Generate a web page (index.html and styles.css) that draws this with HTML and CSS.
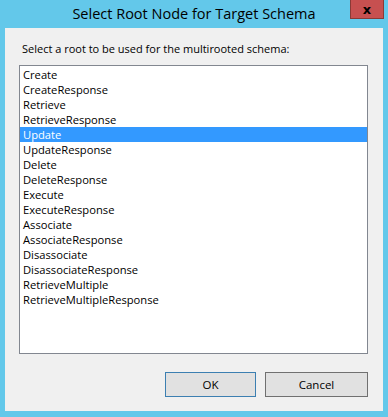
FILE: index.html
```html
<!DOCTYPE html>
<html lang="en">
<head>
    <meta charset="UTF-8">
    <title>Select Root Node for Target Schema</title>
    <link rel="stylesheet" href="styles.css">
</head>
<body>
    <div class="window">
        <div class="titlebar">
            <span class="title">Select Root Node for Target Schema</span>
            <button class="close-button">x</button>
        </div>
        <div class="client">
            <div class="prompt">Select a root to be used for the multirooted schema:</div>
            <ul class="listbox">
                <li>Create</li>
                <li>CreateResponse</li>
                <li>Retrieve</li>
                <li>RetrieveResponse</li>
                <li class="selected">Update</li>
                <li>UpdateResponse</li>
                <li>Delete</li>
                <li>DeleteResponse</li>
                <li>Execute</li>
                <li>ExecuteResponse</li>
                <li>Associate</li>
                <li>AssociateResponse</li>
                <li>Disassociate</li>
                <li>DisassociateResponse</li>
                <li>RetrieveMultiple</li>
                <li>RetrieveMultipleResponse</li>
            </ul>
            <div class="buttons">
                <button class="btn btn-default">OK</button>
                <button class="btn">Cancel</button>
            </div>
        </div>
    </div>
</body>
</html>
```

FILE: styles.css
```css
body {
    margin: 0;
    padding: 0;
    background: #63c8ea;
    font-family: "Open Sans", "Noto Sans", Arial, sans-serif;
}
.window {
    width: 388px;
    height: 417px;
    display: flex;
    flex-direction: column;
}
.titlebar {
    position: relative;
    height: 28px;
    display: flex;
    justify-content: center;
    align-items: center;
}
.title {
    font-size: 14.5px;
    color: #000;
    margin-top: -1px;
}
.close-button {
    position: absolute;
    top: 0;
    right: 4px;
    width: 34px;
    height: 19px;
    padding: 0;
    border: 1px solid #8a3a36;
    border-top: none;
    background: #c75050;
    color: #000;
    font-family: "DejaVu Sans", Arial, sans-serif;
    font-size: 13px;
    font-weight: bold;
    line-height: 15px;
}
.client {
    margin: 0 5px;
    height: 383px;
    background: #f0f0f0;
    box-sizing: border-box;
    padding: 13px 15px 14px 14px;
    display: flex;
    flex-direction: column;
}
.prompt {
    font-size: 11px;
    line-height: 15px;
    color: #000;
    padding-left: 3px;
    height: 24px;
}
.listbox {
    list-style: none;
    margin: 0;
    padding: 0;
    height: 289px;
    box-sizing: border-box;
    border: 1px solid #828790;
    background: #fff;
    font-size: 11.2px;
}
.listbox li {
    height: 15px;
    line-height: 15px;
    padding-left: 3px;
    color: #000;
}
.listbox li:first-child {
    margin-top: 1px;
}
.listbox li.selected {
    background: #3399ff;
    color: #fff;
}
.buttons {
    margin-top: 18px;
    display: flex;
    justify-content: flex-end;
    gap: 9px;
}
.btn {
    height: 25px;
    box-sizing: border-box;
    background: #e1e1e1;
    border: 1px solid #707070;
    font-family: "Open Sans", "Noto Sans", Arial, sans-serif;
    font-size: 11.5px;
    color: #000;
    padding: 0;
}
.btn-default {
    width: 91px;
    border-color: #3c7fb1;
}
.btn:last-child {
    width: 103px;
}
```
